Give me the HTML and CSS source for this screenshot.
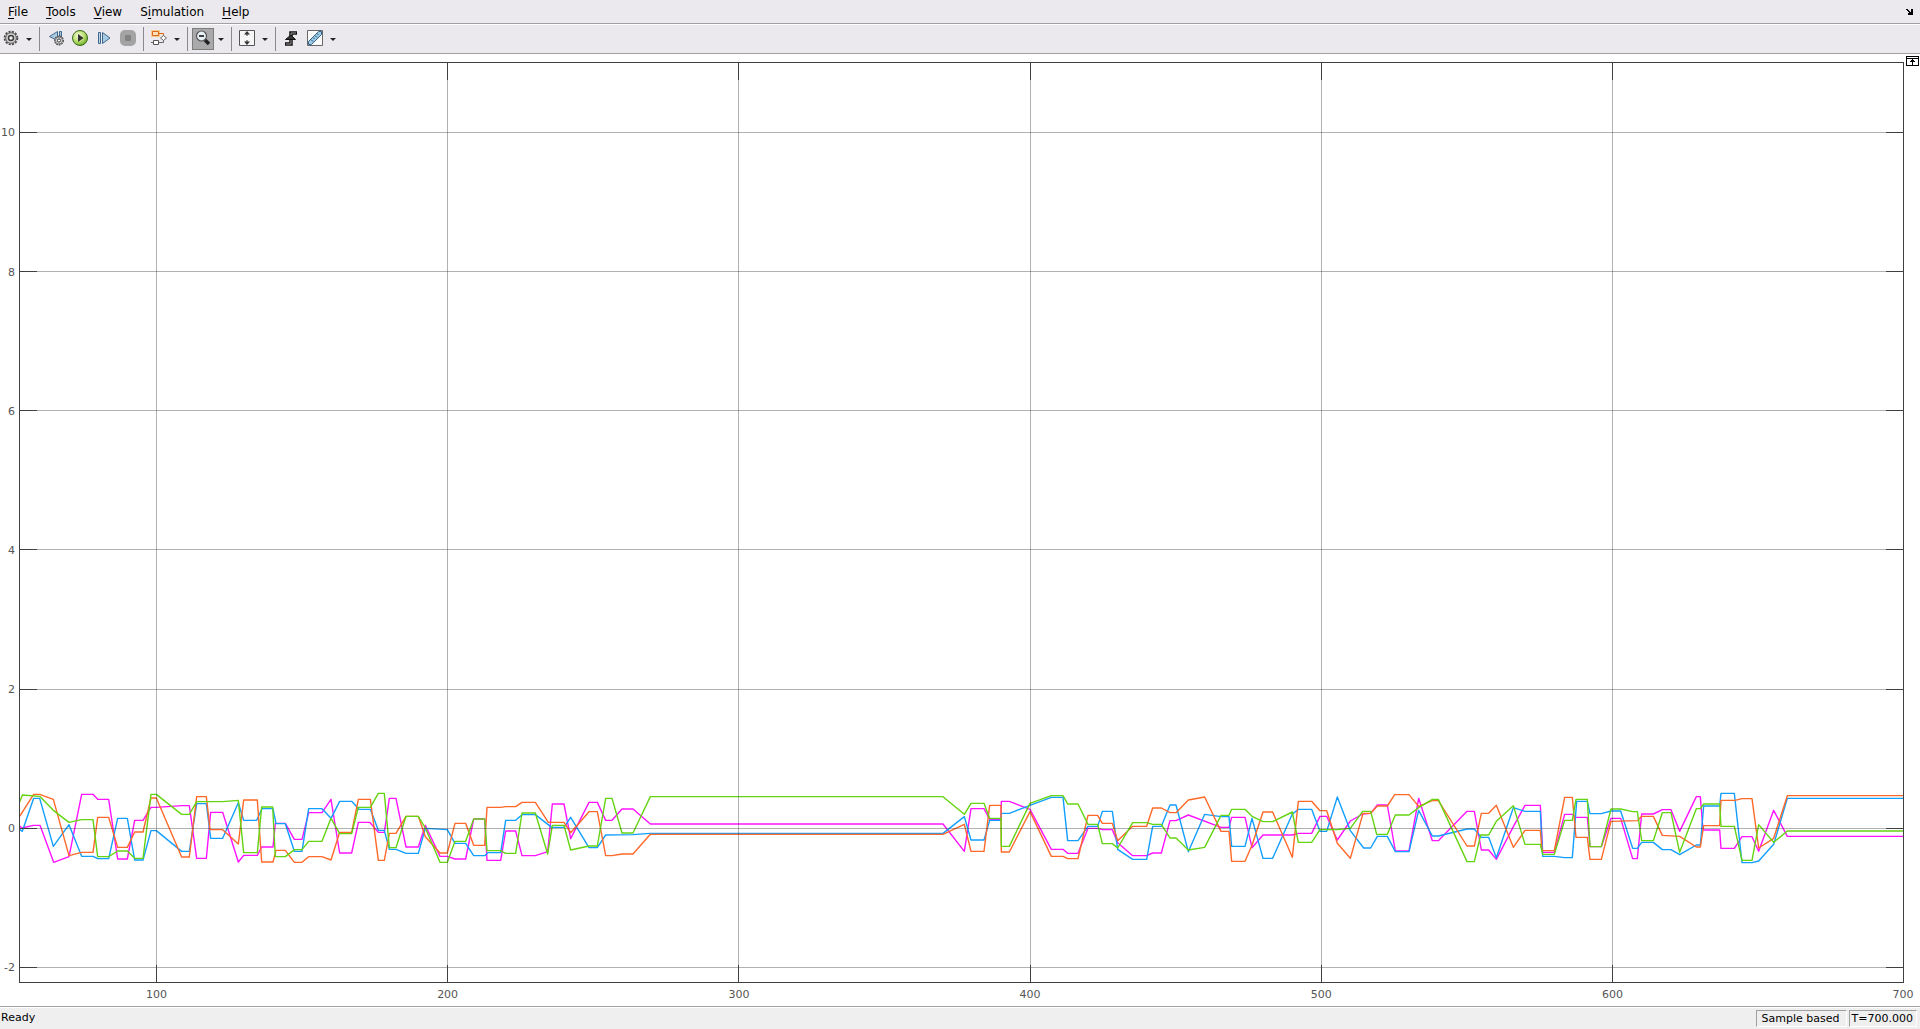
FILE: index.html
```html
<!DOCTYPE html>
<html lang="en">
<head>
<meta charset="utf-8">
<title>Scope</title>
<link rel="stylesheet" href="styles.css">
</head>
<body>
<nav class="menubar" aria-label="Menu">
  <button class="menu"><u>F</u>ile</button>
  <button class="menu"><u>T</u>ools</button>
  <button class="menu"><u>V</u>iew</button>
  <button class="menu">S<u>i</u>mulation</button>
  <button class="menu"><u>H</u>elp</button>
  <button class="dock" aria-label="Dock">
    <svg width="8" height="6" shape-rendering="crispEdges"><path d="M0 0h2v1h1v1h1v1h1V0h2v6H2V4h1V3H2V2H1V1H0z"/></svg>
  </button>
</nav>

<div class="toolbar" role="toolbar" aria-label="Scope tools">
  <button class="tool" aria-label="Configuration">
    <svg width="16" height="16" viewBox="0 0 16 16"><circle cx="8" cy="8" r="6.3" fill="none" stroke="#4a4a4a" stroke-width="2" stroke-dasharray="2.1 1.2"/><circle cx="8" cy="8" r="5.3" fill="#d2d2d2" stroke="#666"/><circle cx="8" cy="8" r="2.5" fill="#eee" stroke="#3c3c3c" stroke-width="1.5"/></svg>
  </button>
  <button class="caret" aria-label="Configuration options"></button>
  <span class="sep"></span>
  <button class="tool" aria-label="Step back">
    <svg class="wide" width="18" height="16" viewBox="0 0 18 16"><path d="M11.500 1.500v9L3.500 6.500z" fill="#a9cbe2" stroke="#41688a"/><path d="M13.500 1.500h2v7h-2z" fill="#a9cbe2" stroke="#41688a"/><circle cx="13" cy="10.500" r="4.200" fill="#ddd" stroke="#555" stroke-width="1.600" stroke-dasharray="1.700 .8"/><circle cx="13" cy="10.500" r="3.500" fill="#ddd" stroke="#555" stroke-width=".7"/><circle cx="13" cy="10.500" r="1.600" fill="#fff" stroke="#333"/></svg>
  </button>
  <button class="tool" aria-label="Run">
    <svg class="wide" width="18" height="18" viewBox="0 0 18 18"><defs><radialGradient id="run" cx=".4" cy=".35" r=".7"><stop offset="0" stop-color="#f4fbdc"/><stop offset=".5" stop-color="#c3e47c"/><stop offset="1" stop-color="#62a51c"/></radialGradient></defs><circle cx="10" cy="9" r="7.500" fill="url(#run)" stroke="#3b6b1c"/><path d="M8 5l5.500 4L8 13z" fill="#333"/></svg>
  </button>
  <button class="tool" aria-label="Step forward">
    <svg width="16" height="16" viewBox="0 0 16 16"><path d="M3.500 2.500h2v11h-2z" fill="#b5d5ea" stroke="#41688a"/><path d="M7.500 2.500L15 8l-7.500 5.500z" fill="#a5cbe6" stroke="#41688a"/></svg>
  </button>
  <button class="tool" aria-label="Stop" disabled>
    <svg class="wide" width="18" height="16" viewBox="0 0 18 16"><rect x="2" width="16" height="16" rx="5" fill="#a3a3a3"/><rect x="7" y="5" width="6" height="6" rx="1" fill="#828282"/></svg>
  </button>
  <span class="sep"></span>
  <button class="tool" aria-label="Highlight block">
    <svg width="16" height="16" viewBox="0 0 16 16"><rect x="0" y="0" width="9" height="7" fill="#fbc98c"/><path d="M12.500 10v2.500H8M0 12.500h2" fill="none" stroke="#666"/><path d="M1.500 1.500h6v4h-6zM8 3.500h4.500V6" fill="#ffe2bd" stroke="#d9661d"/><path d="M2.500 10.500h5v4h-5z" fill="#fff" stroke="#555"/><path d="M9.500 8l3-2.500L15.500 8l-3 2.500z" fill="#fff" stroke="#666"/></svg>
  </button>
  <button class="caret" aria-label="Highlight options"></button>
  <span class="sep"></span>
  <button class="tool pressed" aria-label="Zoom out" aria-pressed="true">
    <svg width="16" height="16" viewBox="0 0 16 16"><path d="M10 10l4 4" stroke="#222" stroke-width="3.500"/><circle cx="6.500" cy="6" r="5" fill="#e7f0f5" stroke="#555" stroke-width="1.200"/><path d="M4 6h5" stroke="#111" stroke-width="1.600"/></svg>
  </button>
  <button class="caret" aria-label="Zoom options"></button>
  <span class="sep"></span>
  <button class="tool" aria-label="Scale Y-axis limits">
    <svg width="16" height="16" viewBox="0 0 16 16"><path d="M.5.5h15v15H.5z" fill="#f6f6f6" stroke="#555"/><path d="M8 2v4M8 10v4" stroke="#333"/><path d="M5 4.500L8 1l3 3.500zM5 11.500L8 15l3-3.500z" fill="#333"/></svg>
  </button>
  <button class="caret" aria-label="Scaling options"></button>
  <span class="sep"></span>
  <button class="tool" aria-label="Triggers">
    <svg width="16" height="16" viewBox="0 0 16 16"><path d="M2 14h6V3h6" fill="none" stroke="#111" stroke-width="3.500"/><path d="M3 14h5V3h5" fill="none" stroke="#999" stroke-width="1"/><path d="M2.500 9.500L8 5l4.500 4.500z" fill="#333" stroke="#111"/></svg>
  </button>
  <button class="tool" aria-label="Measurements">
    <svg width="16" height="16" viewBox="0 0 16 16"><path d="M.5.5h15v15H.5z" fill="#fafafa" stroke="#666"/><path d="M1.500 11.500l10-10h3v3l-10 10h-3z" fill="#9ccae6" stroke="#36688c"/><path d="M4 9.500l2 2M6 7.500l1.500 1.500M8 5.500l2 2M10 3.500L11.500 5" stroke="#245476"/></svg>
  </button>
  <button class="caret" aria-label="Measurement options"></button>
</div>

<main class="scope">
  <div class="frame">
    <svg class="axes" role="img" aria-label="Signal plot">
      <svg class="traces" width="100%" height="100%" viewBox="60 -2151 5649 2757" preserveAspectRatio="none">
        <polyline class="trace magenta" points="59,138 66,144 100,136 120,136 161,247 207,230 245,43 279,43 293,58 326,58 353,237 382,237 404,121 429,121 453,82 469,82 545,77 568,77 590,235 619,235 632,97 668,97 715,246 731,226 772,226 785,201 819,201 826,130 856,130 883,178 906,178 926,98 966,98 993,58 1019,219 1055,219 1075,127 1109,127 1135,157 1153,157 1168,55 1188,55 1218,201 1255,201 1276,136 1320,229 1342,229 1365,237 1397,237 1421,117 1454,117 1461,241 1502,241 1517,153 1547,153 1566,227 1606,227 1643,215 1657,72 1692,72 1712,176 1767,67 1792,67 1817,121 1836,121 1866,87 1899,87 1951,132 2829,132 2893,214 2913,86 2952,86 2969,118 3003,118 3004,64 3028,64 3090,88 3154,208 3189,208 3203,220 3234,220 3264,145 3293,145 3307,149 3337,149 3353,188 3398,227 3440,227 3458,219 3484,219 3510,122 3528,122 3565,105 3663,142 3687,142 3695,112 3735,112 3756,203 3789,165 3877,165 3895,160 3935,160 3960,109 3980,109 4012,180 4051,123 4088,102 4112,100 4132,75 4162,75 4186,213 4227,213 4256,55 4297,182 4315,182 4401,94 4423,94 4444,210 4466,210 4489,238 4540,140 4575,76 4621,76 4628,217 4663,217 4694,103 4717,103 4726,112 4762,112 4770,200 4804,200 4833,115 4862,115 4898,236 4912,236 4925,102 4960,102 4987,89 5013,89 5039,154 5089,50 5101,50 5109,150 5159,150 5163,205 5203,205 5226,170 5256,170 5276,214 5321,91 5362,169 5711,169"/>
        <polyline class="trace blue" points="59,148 67,154 101,55 119,55 160,199 207,134 245,229 279,229 293,236 326,236 353,115 382,115 404,240 429,240 453,152 469,152 545,214 568,214 590,71 619,71 632,175 668,175 715,68 731,121 770,121 786,86 819,86 828,131 856,131 883,214 906,214 926,86 966,86 993,115 1019,64 1055,64 1077,88 1111,88 1135,151 1153,151 1168,208 1188,208 1218,220 1255,220 1276,145 1342,149 1365,190 1397,190 1421,227 1454,227 1464,218 1502,218 1517,121 1547,121 1566,104 1606,104 1655,142 1692,142 1712,112 1767,203 1792,203 1817,165 1899,164 1951,160 2829,160 2893,110 2913,180 2952,180 2969,121 3003,121 3004,100 3028,100 3090,76 3154,52 3189,52 3203,182 3234,182 3264,139 3293,139 3307,94 3337,94 3353,208 3398,238 3440,238 3458,139 3484,139 3510,75 3528,75 3565,215 3614,103 3663,110 3687,110 3695,199 3735,199 3756,115 3789,235 3818,235 3877,102 3895,88 3935,88 3960,154 3980,154 4012,51 4051,152 4091,204 4112,204 4132,169 4162,169 4186,215 4227,215 4256,91 4297,168 4315,168 4401,147 4423,147 4444,172 4466,172 4489,233 4540,83 4575,94 4621,94 4628,229 4663,229 4694,233 4717,233 4730,64 4762,64 4770,101 4804,101 4833,93 4862,93 4898,205 4912,205 4925,187 4960,187 4987,209 5013,209 5039,224 5089,195 5101,195 5111,78 5159,78 5163,40 5203,40 5226,248 5256,248 5276,243 5321,193 5362,55 5711,55"/>
        <polyline class="trace orange" points="59,109 101,43 119,43 160,58 207,227 245,217 279,217 293,112 326,112 353,202 382,202 404,156 429,156 453,54 469,54 545,231 568,231 590,50 619,50 630,149 668,149 715,192 731,60 772,60 785,246 819,246 828,211 856,211 883,247 906,247 926,230 966,230 993,240 1019,157 1055,157 1075,58 1111,58 1135,241 1153,241 1168,160 1188,160 1218,109 1255,109 1276,170 1320,219 1342,219 1365,130 1397,130 1421,196 1454,196 1461,82 1502,82 1517,80 1547,80 1566,67 1606,67 1645,127 1692,127 1712,158 1767,95 1792,95 1817,227 1836,227 1866,222 1899,222 1951,163 2829,163 2893,133 2913,214 2952,214 2969,76 3003,76 3004,216 3028,216 3090,95 3154,229 3189,229 3203,236 3234,236 3264,106 3293,106 3307,130 3337,130 3353,182 3398,139 3440,139 3458,84 3484,84 3510,98 3528,98 3565,60 3614,51 3663,154 3687,154 3695,244 3735,244 3756,196 3789,96 3818,96 3877,232 3895,64 3935,64 3960,92 3980,92 4012,190 4051,235 4089,100 4112,100 4132,78 4162,78 4184,44 4227,44 4256,79 4297,62 4315,62 4401,198 4423,198 4444,100 4466,100 4489,76 4540,202 4575,151 4621,151 4626,212 4663,212 4694,52 4717,52 4728,172 4762,172 4770,238 4804,238 4833,124 4912,122 4925,109 4960,109 4987,166 5039,169 5089,201 5101,201 5111,137 5159,137 5163,61 5205,61 5226,56 5256,56 5276,204 5321,175 5362,47 5711,47"/>
        <polyline class="trace green" points="59,66 67,45 119,49 160,91 207,127 245,119 279,119 293,230 326,230 353,213 382,213 404,235 429,235 453,43 469,43 545,103 568,103 590,65 668,65 715,61 731,218 772,218 785,81 818,81 826,230 856,230 883,209 906,209 926,184 966,184 993,115 1019,161 1055,161 1075,82 1111,82 1135,40 1153,40 1168,203 1188,203 1218,109 1255,109 1276,144 1320,247 1342,247 1365,184 1397,184 1421,117 1454,117 1461,212 1502,212 1517,220 1547,220 1566,99 1606,99 1643,222 1657,136 1692,136 1712,210 1767,198 1792,198 1817,55 1836,55 1866,159 1899,159 1951,50 2829,50 2893,103 2913,70 2952,70 2969,115 3003,115 3004,199 3028,199 3090,70 3154,47 3189,47 3203,72 3234,72 3264,133 3293,133 3307,191 3337,191 3353,204 3398,128 3440,128 3458,133 3484,133 3510,174 3528,174 3565,210 3614,202 3663,106 3687,106 3695,88 3735,88 3756,109 3789,125 3818,125 3877,96 3895,187 3935,187 3960,149 4012,149 4051,145 4088,94 4112,94 4130,163 4162,163 4186,105 4227,105 4256,83 4297,58 4315,58 4401,245 4423,245 4442,165 4466,165 4489,124 4540,77 4575,193 4621,193 4628,223 4663,223 4694,121 4717,121 4728,58 4762,58 4770,200 4804,200 4833,87 4862,87 4898,95 4912,95 4925,182 4960,182 4987,98 5013,98 5039,217 5089,86 5101,86 5111,72 5159,72 5163,139 5203,139 5226,241 5256,241 5276,134 5321,187 5362,153 5711,153"/>
      </svg>
      <g class="grid">
        <line x1="7.25%" x2="7.25%" y1="0" y2="100%"/>
        <line x1="22.71%" x2="22.71%" y1="0" y2="100%"/>
        <line x1="38.18%" x2="38.18%" y1="0" y2="100%"/>
        <line x1="53.64%" x2="53.64%" y1="0" y2="100%"/>
        <line x1="69.1%" x2="69.1%" y1="0" y2="100%"/>
        <line x1="84.57%" x2="84.57%" y1="0" y2="100%"/>
        <line x1="0" x2="100%" y1="7.56%" y2="7.56%"/>
        <line x1="0" x2="100%" y1="22.7%" y2="22.7%"/>
        <line x1="0" x2="100%" y1="37.85%" y2="37.85%"/>
        <line x1="0" x2="100%" y1="52.99%" y2="52.99%"/>
        <line x1="0" x2="100%" y1="68.13%" y2="68.13%"/>
        <line x1="0" x2="100%" y1="83.28%" y2="83.28%"/>
        <line x1="0" x2="100%" y1="98.42%" y2="98.42%"/>
      </g>
      <!-- one dash at the start of each line is the tick; each line is drawn from both ends -->
      <g class="ticks">
        <line x1="7.25%" x2="7.25%" y1="0" y2="100%"/><line x1="7.25%" x2="7.25%" y1="100%" y2="0"/>
        <line x1="22.71%" x2="22.71%" y1="0" y2="100%"/><line x1="22.71%" x2="22.71%" y1="100%" y2="0"/>
        <line x1="38.18%" x2="38.18%" y1="0" y2="100%"/><line x1="38.18%" x2="38.18%" y1="100%" y2="0"/>
        <line x1="53.64%" x2="53.64%" y1="0" y2="100%"/><line x1="53.64%" x2="53.64%" y1="100%" y2="0"/>
        <line x1="69.1%" x2="69.1%" y1="0" y2="100%"/><line x1="69.1%" x2="69.1%" y1="100%" y2="0"/>
        <line x1="84.57%" x2="84.57%" y1="0" y2="100%"/><line x1="84.57%" x2="84.57%" y1="100%" y2="0"/>
        <line x1="0" x2="100%" y1="7.56%" y2="7.56%"/><line x1="100%" x2="0" y1="7.56%" y2="7.56%"/>
        <line x1="0" x2="100%" y1="22.7%" y2="22.7%"/><line x1="100%" x2="0" y1="22.7%" y2="22.7%"/>
        <line x1="0" x2="100%" y1="37.85%" y2="37.85%"/><line x1="100%" x2="0" y1="37.85%" y2="37.85%"/>
        <line x1="0" x2="100%" y1="52.99%" y2="52.99%"/><line x1="100%" x2="0" y1="52.99%" y2="52.99%"/>
        <line x1="0" x2="100%" y1="68.13%" y2="68.13%"/><line x1="100%" x2="0" y1="68.13%" y2="68.13%"/>
        <line x1="0" x2="100%" y1="83.28%" y2="83.28%"/><line x1="100%" x2="0" y1="83.28%" y2="83.28%"/>
        <line x1="0" x2="100%" y1="98.42%" y2="98.42%"/><line x1="100%" x2="0" y1="98.42%" y2="98.42%"/>
      </g>
      <g class="labels y">
        <text x="-5" y="7.56%" dy="4">10</text>
        <text x="-5" y="22.7%" dy="4">8</text>
        <text x="-5" y="37.85%" dy="4">6</text>
        <text x="-5" y="52.99%" dy="4">4</text>
        <text x="-5" y="68.13%" dy="4">2</text>
        <text x="-5" y="83.28%" dy="4">0</text>
        <text x="-5" y="98.42%" dy="4">-2</text>
      </g>
      <g class="labels x">
        <text x="7.25%" y="100%" dy="16">100</text>
        <text x="22.71%" y="100%" dy="16">200</text>
        <text x="38.18%" y="100%" dy="16">300</text>
        <text x="53.64%" y="100%" dy="16">400</text>
        <text x="69.1%" y="100%" dy="16">500</text>
        <text x="84.57%" y="100%" dy="16">600</text>
        <text x="100%" y="100%" dy="16">700</text>
      </g>
    </svg>
  </div>
  <button class="maximize" aria-label="Maximize axes">
    <svg width="13" height="10" shape-rendering="crispEdges"><path d="M0 0h13v10H0z"/><path d="M1 1h11v1H1zM1 3h11v6H1z" fill="#fff"/><path d="M6 3h1v1h1v1h1v1H7v3H6V6H4V5h1V4h1z"/></svg>
  </button>
</main>

<footer class="status">
  <span class="ready">Ready</span>
  <span class="cell mode">Sample based</span>
  <span class="cell">T=700.000</span>
</footer>
</body>
</html>
```

FILE: styles.css
```css
* { box-sizing: border-box; }

body {
  margin: 0;
  height: 100vh;
  display: flex;
  flex-direction: column;
  background: #fff;
  color: #000;
  font: 12px/15px "DejaVu Sans", sans-serif;
}

button {
  margin: 0;
  padding: 0;
  border: 0;
  background: none;
  color: inherit;
  font: inherit;
}

svg { display: block; }

/* Menu bar */
.menubar {
  display: flex;
  align-items: center;
  height: 24px;
  padding-top: 1px;
  background: #ebe9ed;
  border-bottom: 1px solid #a0a0a0;
}
.menu { padding: 0 10px 0 8px; }
.menu u { text-underline-offset: 2px; text-decoration-skip-ink: none; }
.dock { margin-left: auto; padding-right: 6px; }

/* Tool bar */
.toolbar {
  display: flex;
  align-items: center;
  height: 30px;
  background: #ebe9ed;
  border-top: 1px solid #fff;
  border-bottom: 1px solid #a0a0a0;
}
.tool {
  display: flex;
  align-items: center;
  justify-content: center;
  flex: none;
  width: 24px;
  height: 24px;
  padding-bottom: 2px;
}
.tool:first-child { margin-left: -1px; }
.tool.pressed {
  width: 22px;
  height: 22px;
  margin: 0 1px;
  background: #a9a9ab;
  border: 1px solid #7d7d7d;
}
.caret {
  display: flex;
  justify-content: center;
  width: 12px;
}
.caret::before {
  content: "";
  border: 3px solid transparent;
  border-top-color: #222;
  border-bottom: 0;
}
.sep {
  width: 1px;
  height: 24px;
  margin: 0 3px 0 4px;
  background: #8a8a8a;
}

/* Plot */
.scope {
  flex: 1;
  min-height: 0;
  display: flex;
  align-items: stretch;
  padding: 0 0 23px 19px;
}
.frame {
  flex: 1;
  margin-top: 8px;
  border: 1px solid #404040;
}
.axes {
  width: 100%;
  height: 100%;
  overflow: visible;
}
.trace {
  fill: none;
  stroke-width: 1.4;
  stroke-linejoin: round;
  vector-effect: non-scaling-stroke;
}
.magenta { stroke: #ff13ff; }
.blue { stroke: #139fff; }
.orange { stroke: #ff6929; }
.green { stroke: #64d413; }
.grid line {
  stroke: #262626;
  stroke-opacity: .36;
  shape-rendering: crispEdges;
}
.ticks line {
  stroke: #404040;
  stroke-dasharray: 17 9999;
  shape-rendering: crispEdges;
}
.labels { fill: #555; font-size: 11px; }
.labels.x { text-anchor: middle; }
.labels.y { text-anchor: end; }
.maximize {
  width: 16px;
  padding: 2px 0 0 2px;
  align-self: flex-start;
}

/* Status bar */
.status {
  display: flex;
  align-items: center;
  gap: 2px;
  height: 23px;
  padding: 1px 3px 0 1px;
  background: #efefef;
  border-top: 1px solid #a0a0a0;
  box-shadow: inset 0 1px #fff;
  font-size: 11px;
}
.ready { margin-right: auto; padding-bottom: 3px; }
.cell {
  padding: 0 3px 0 2px;
  border: 1px solid;
  border-color: #a0a0a0 #fff #fff #a0a0a0;
}
.mode { min-width: 91px; text-align: center; }
```
